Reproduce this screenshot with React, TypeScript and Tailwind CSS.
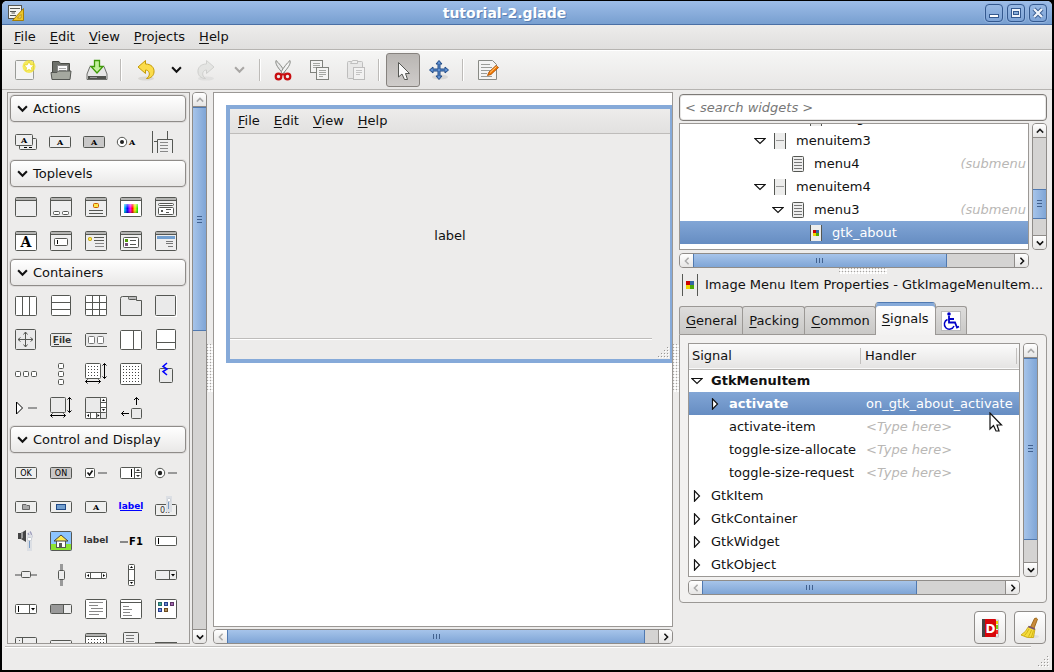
import React from "react";

type Kids = { children?: React.ReactNode };
const INK = "#555753";

/* ---------- small drawing helpers ---------- */

function Box({ x = 0, y = 0, w, h, f = "#fff", s = INK, r = 1 }: { x?: number; y?: number; w: number; h: number; f?: string; s?: string; r?: number }) {
  return <rect x={x + 0.5} y={y + 0.5} width={w - 1} height={h - 1} rx={r} fill={f} stroke={s} />;
}

function Fill({ x, y, w, h, f = INK }: { x: number; y: number; w: number; h: number; f?: string }) {
  return <rect x={x} y={y} width={w} height={h} fill={f} shapeRendering="crispEdges" />;
}

function Line({ d, s = INK }: { d: string; s?: string }) {
  return <path d={d} stroke={s} fill="none" />;
}

function Glyph({ children }: Kids) {
  return (
    <svg width="23" height="23" viewBox="0 0 23 23" className="overflow-visible" aria-hidden="true">
      {children}
    </svg>
  );
}

function Txt({ x, y, size = 8, fill = "#000", serif = false, light = false, children }: { x: number; y: number; size?: number; fill?: string; serif?: boolean; light?: boolean } & Kids) {
  return (
    <text x={x} y={y} fontSize={size} fill={fill} fontWeight={light ? "normal" : "bold"} textAnchor="middle" fontFamily={serif ? "DejaVu Serif, serif" : "DejaVu Sans, sans-serif"}>
      {children}
    </text>
  );
}

function Win({ f = "#eee", children }: { f?: string } & Kids) {
  return (
    <Glyph>
      <Box y={2} w={22} h={20} f={f} />
      <Fill x={1} y={3} w={20} h={2} f="#b4b4b2" />
      <Fill x={1} y={5} w={20} h={1} />
      {children}
    </Glyph>
  );
}

function ButtonShape({ f = "#efefee", children }: { f?: string } & Kids) {
  return (
    <Glyph>
      <Box y={6} w={22} h={12} f={f} />
      {children}
    </Glyph>
  );
}

function Dots({ n, step = 3, x = 3, y = 4 }: { n: number; step?: number; x?: number; y?: number }) {
  const cells = Array.from({ length: n * n }, (_, i) => i);
  return <>{cells.map((i) => <Fill key={i} x={x + (i % n) * step} y={y + Math.floor(i / n) * step} w={1} h={1} f="#444" />)}</>;
}

const SIZE_ARROWS = (
  <>
    <Line s="#000" d="M0.5 19.5H15.5M2.5 17.5L0.5 19.5L2.5 21.5M13.5 17.5L15.5 19.5L13.5 21.5" />
    <Line s="#000" d="M19.5 1.5V16.5M17.5 3.5L19.5 1.5L21.5 3.5M17.5 14.5L19.5 16.5L21.5 14.5" />
  </>
);

/* ---------- palette ---------- */

const actions: [string, React.ReactNode][] = [
  ["Action Group", <Glyph><Box x={4} y={8} w={18} h={12} f="#eee" /><Fill x={9} y={17} w={3} h={1} f="#000" /><Fill x={14} y={17} w={3} h={1} f="#000" /><Box x={0} y={4} w={18} h={12} f="#eee" /><Txt x={9} y={13} serif>A</Txt></Glyph>],
  ["Action", <Glyph><Box x={-1} y={6} w={22} h={12} f="#eee" /><Txt x={10} y={15} serif>A</Txt></Glyph>],
  ["Toggle Action", <Glyph><Box x={-2} y={6} w={22} h={12} f="#c9c8c8" /><Txt x={9} y={15} serif>A</Txt></Glyph>],
  ["Radio Action", <Glyph><circle cx={2} cy={12} r={4.7} fill="#fff" stroke={INK} /><circle cx={2} cy={12} r={2} fill="#222" /><Txt x={12} y={15} serif>A</Txt></Glyph>],
  ["Recent Action", <Glyph><Line d="M-2.5 1V23M-1 11.5H2M12.5 1V9" /><path d="M2.5 23V9.5H17.5V23" fill="#eee" stroke={INK} /><Line s="#888" d="M5 12.5H13M5 15.5H13M5 18.5H13M5 21.5H13" /></Glyph>],
];

const toplevels: [string, React.ReactNode][] = [
  ["Window", <Win />],
  ["Dialog Box", <Win><Box x={3} y={16} w={7} h={4} /><Box x={12} y={16} w={7} h={4} /></Win>],
  ["About Dialog", <Win><Box x={8} y={8} w={6} h={5} f="#fce94f" s="#ce5c00" /><Line d="M4 15.5H18M4 18.5H18" /></Win>],
  ["Color Selection Dialog", <Win f="#fff">
    <defs>
      <linearGradient id="hue"><stop offset="0" stopColor="#0ee" /><stop offset=".25" stopColor="#00f" /><stop offset=".45" stopColor="#f0f" /><stop offset=".6" stopColor="#f00" /><stop offset=".78" stopColor="#ff0" /><stop offset="1" stopColor="#0d0" /></linearGradient>
      <linearGradient id="fade" x2="0" y2="1"><stop offset="0" stopColor="#fff" stopOpacity=".5" /><stop offset=".5" stopColor="#fff" stopOpacity="0" /><stop offset="1" stopColor="#000" stopOpacity=".3" /></linearGradient>
    </defs>
    <rect x="4" y="9" width="14" height="9" fill="url(#hue)" /><rect x="4" y="9" width="14" height="9" fill="url(#fade)" />
  </Win>],
  ["File Chooser Dialog", <Win><Box x={3} y={8} w={16} h={3} /><Box x={3} y={12} w={16} h={8} /><Fill x={6} y={15} w={2} h={2} /><Line d="M11 14.5H16M11 17.5H14" /></Win>],
  ["Font Selection Dialog", <Win f="#fff"><Txt x={11} y={18} size={14} serif>A</Txt></Win>],
  ["Input Dialog", <Win><Box x={4} y={9} w={14} h={8} /><Fill x={7} y={11} w={1} h={4} f="#000" /></Win>],
  ["Message Dialog", <Win><Box x={3} y={8} w={4} h={4} f="#fce94f" s="#c4a000" /><Line d="M9 8.5H19M9 11.5H19" /><Line s="#888" d="M10 14.5H19M10 17.5H19" /></Win>],
  ["Recent Chooser Dialog", <Win><Box x={3} y={8} w={16} h={11} /><Fill x={5} y={10} w={3} h={3} f="#4e9a06" /><Fill x={5} y={14} w={3} h={3} f="#75507b" /><Line d="M10 11.5H16M10 15.5H16" /></Win>],
  ["Assistant", <Win><Fill x={2} y={7} w={18} h={3} f="#729fcf" /><Line s="#777" d="M11 12.5H18M11 14.5H18M13 17.5H18" /></Win>],
];

const containers: [string, React.ReactNode][] = [
  ["Horizontal Box", <Glyph><Box y={2} w={22} h={20} /><Line d="M7.5 2V22M14.5 2V22" /></Glyph>],
  ["Vertical Box", <Glyph><Box x={1} y={1} w={20} h={21} /><Line d="M1 8.5H21M1 15.5H21" /></Glyph>],
  ["Table", <Glyph><Box y={1} w={22} h={21} /><Line d="M7.5 1V22M14.5 1V22M0 8.5H22M0 15.5H22" /></Glyph>],
  ["Notebook", <Glyph><path d="M.5 4.5Q.5 2.5 2.5 2.5H16.5V6.5H21.5V21.5H.5Z" fill="#eaeaea" stroke={INK} /><Box x={8} y={2} w={9} h={4} f="#bbb" /></Glyph>],
  ["Frame", <Glyph><rect x={0.5} y={1.5} width={21} height={21} fill="none" stroke="#fff" /><Box y={1} w={21} h={21} f="#eaeaea" /></Glyph>],
  ["Aspect Frame", <Glyph><Box y={1} w={21} h={21} f="#eaeaea" /><Line d="M10.5 4V19M3 11.5H18M8.5 6.5L10.5 4L12.5 6.5M8.5 16.5L10.5 19L12.5 16.5M5.5 9.5L3 11.5L5.5 13.5M15.5 9.5L18 11.5L15.5 13.5" /></Glyph>],
  ["Menu Bar", <Glyph><path d="M22 5.5H1.5L.5 6.5V17.5L1.5 18.5H22" fill="#eaeaea" stroke={INK} /><Txt x={12} y={15} size={9} fill="#333">File</Txt><Fill x={4} y={16} w={5} h={1} f="#333" /></Glyph>],
  ["Toolbar", <Glyph><path d="M22 5.5H1.5L.5 6.5V17.5L1.5 18.5H22" fill="#eaeaea" stroke={INK} /><Box x={3} y={8} w={7} h={8} s="#777" /><Box x={12} y={8} w={7} h={8} s="#777" /></Glyph>],
  ["Horizontal Panes", <Glyph><Box y={2} w={22} h={20} /><Line d="M13.5 2V22" /></Glyph>],
  ["Vertical Panes", <Glyph><Box x={1} y={1} w={20} h={21} /><Line d="M1 14.5H21" /></Glyph>],
  ["Horizontal Button Box", <Glyph><Box y={9} w={6} h={6} /><Box x={8} y={9} w={6} h={6} /><Box x={16} y={9} w={6} h={6} /></Glyph>],
  ["Vertical Button Box", <Glyph><Box x={8} y={1} w={6} h={6} /><Box x={8} y={9} w={6} h={6} /><Box x={8} y={17} w={6} h={6} /></Glyph>],
  ["Layout", <Glyph><Box y={1} w={16} h={16} /><Dots n={4} />{SIZE_ARROWS}</Glyph>],
  ["Fixed", <Glyph><Box y={1} w={22} h={22} /><Dots n={6} /></Glyph>],
  ["Event Box", <Glyph><Box x={4} y={6} w={14} h={15} f="#eaeaea" /><path d="M12 1L8 4.5L12 7L8 9.5L12 13" stroke="#00f" strokeWidth="1.5" fill="none" /></Glyph>],
  ["Expander", <Glyph><path d="M1.5 6L7.5 12L1.5 18Z" fill="#fff" stroke="#000" /><Fill x={13} y={11} w={9} h={2} f="#999" /></Glyph>],
  ["Viewport", <Glyph><Box y={1} w={16} h={16} f="#eaeaea" />{SIZE_ARROWS}</Glyph>],
  ["Scrolled Window", <Glyph><Box y={1} w={22} h={22} f="#eaeaea" /><Box x={15} y={1} w={7} h={22} /><Box y={16} w={22} h={7} /><Line d="M5.5 16V23M11.5 16V23M15.5 16V23M15 6.5H22M15 11.5H22" /><path d="M17 5L18.5 3L20 5ZM17 13L18.5 15L20 13ZM4 18L2 19.5L4 21ZM12.500 18L14.500 19.500L12.500 21Z" fill="#000" /><Fill x={16} y={17} w={5} h={5} f="#eaeaea" /></Glyph>],
  ["Alignment", <Glyph><Box x={11} y={12} w={11} h={11} f="#eaeaea" /><Line s="#000" d="M16.5 9V1.500M14 4L16.500 1.500L19 4M9 17.500H1.500M4 15L1.500 17.500L4 20" /></Glyph>],
];

const textLines = <Line s="#888" d="M4 5.500H18M4 8.500H13M6 11.500H18M4 14.500H18M4 17.500H14" />;

const controls: [string, React.ReactNode][] = [
  ["Button", <ButtonShape><Txt x={11} y={15} light>OK</Txt></ButtonShape>],
  ["Toggle Button", <ButtonShape f="#c9c8c8"><Txt x={11} y={15} light>ON</Txt></ButtonShape>],
  ["Check Button", <Glyph><Box y={7} w={10} h={10} /><path d="M2.500 11.500L4.500 14L7.500 9.500" stroke="#111" strokeWidth="1.600" fill="none" /><Fill x={13} y={11} w={9} h={2} f="#999" /></Glyph>],
  ["Spin Button", <Glyph><Box y={6} w={22} h={12} /><Fill x={11} y={8} w={1} h={8} f="#000" /><Line d="M14.500 6V18M15 11.500H22" /><path d="M16 10L18 8L20 10ZM16 14L18 16L20 14Z" fill="#333" /></Glyph>],
  ["Radio Button", <Glyph><circle cx={5} cy={12} r={4.700} fill="#fff" stroke={INK} /><circle cx={5} cy={12} r={2.200} fill="#222" /><Fill x={13} y={11} w={9} h={2} f="#999" /></Glyph>],
  ["File Chooser Button", <ButtonShape><path d="M7.500 9.500H11L12 10.500H14.500V14.500H7.500Z" fill="#aaa" stroke="#666" /></ButtonShape>],
  ["Color Button", <ButtonShape><Box x={6} y={9} w={10} h={6} f="#729fcf" s="#204a87" r={0} /></ButtonShape>],
  ["Font Button", <ButtonShape><Txt x={11} y={15} serif>A</Txt></ButtonShape>],
  ["Link Button", <Glyph><Txt x={11} y={14} size={9} fill="#00f">label</Txt><Fill x={0} y={15} w={22} h={1} f="#00f" /></Glyph>],
  ["Scale Button", <Glyph><Box y={9} w={22} h={12} f="#efefee" /><Txt x={10} y={18} size={8} fill="#333" light>0..</Txt><Fill x={11} y={1} w={6} h={16} f="#dcdfe4" /><Fill x={13} y={6} w={1} h={8} f="#7b9cc4" /><Box x={12} y={3} w={4} h={4} s="#c6cbd2" /></Glyph>],
  ["Volume Button", <Glyph><path d="M3 4H6L11 1V13L6 10H3Z" fill="#444" /><path d="M6 4V10L8 9V3Z" fill="#999" /><path d="M13 4Q15 7 13 10M15 2.500Q18.500 7 15 12" stroke="#a0a0be" strokeWidth="1.400" fill="none" /><Fill x={12} y={6} w={5} h={16} f="#dcdfe4" /><Fill x={14} y={11} w={1} h={8} f="#7b9cc4" /><Box x={12} y={8} w={5} h={4} s="#c6cbd2" /></Glyph>],
  ["Image", <Glyph><Box y={2} w={22} h={20} f="#8cc4ff" /><Fill x={1} y={15} w={20} h={6} f="#8ae234" /><Box x={6} y={11} w={10} h={8} f="#fff" r={0} /><path d="M4 12L11 6L18 12Z" fill="#fce94f" stroke="#444" /><Fill x={9} y={14} w={3} h={5} /></Glyph>],
  ["Label", <Glyph><Txt x={11} y={14} size={9} fill="#333">label</Txt></Glyph>],
  ["Accelerator Label", <Glyph><Fill x={0} y={12} w={8} h={2} f="#888" /><Txt x={16} y={16} size={10}>F1</Txt></Glyph>],
  ["Text Entry", <Glyph><Box y={7} w={22} h={10} /><Fill x={3} y={9} w={1} h={6} f="#000" /></Glyph>],
  ["Horizontal Scale", <Glyph><Fill x={0} y={11} w={22} h={2} f="#999" /><Box x={6} y={8} w={10} h={7} f="#eee" /></Glyph>],
  ["Vertical Scale", <Glyph><Fill x={10} y={1} w={3} h={22} f="#999" /><Box x={8} y={7} w={7} h={10} f="#eee" /></Glyph>],
  ["Horizontal Scrollbar", <Glyph><Box y={9} w={22} h={7} /><Line d="M5.500 9V16M16.500 9V16" /><path d="M4 11L2 12.500L4 14ZM18 11L20 12.500L18 14Z" fill="#000" /></Glyph>],
  ["Vertical Scrollbar", <Glyph><Box x={8} y={1} w={7} h={22} /><Line d="M8 6.500H15M8 17.500H15" /><path d="M10 5L11.500 3L13 5ZM10 19L11.500 21L13 19Z" fill="#000" /></Glyph>],
  ["Combo Box", <Glyph><Box y={7} w={22} h={10} f="#eee" /><Line d="M14.500 7V17" /><path d="M16 11H20L18 13.500Z" fill="#000" /></Glyph>],
  ["Combo Box Entry", <Glyph><Box y={7} w={22} h={10} /><Fill x={3} y={9} w={1} h={6} f="#000" /><Line d="M14.500 7V17" /><path d="M16 11H20L18 13.500Z" fill="#000" /></Glyph>],
  ["Progress Bar", <Glyph><Box y={7} w={22} h={10} f="#eee" /><Fill x={1} y={8} w={12} h={8} f="#999" /><Line d="M13.500 7V17" /></Glyph>],
  ["Text View", <Glyph><Box y={2} w={22} h={20} />{textLines}</Glyph>],
  ["Tree View", <Glyph><Box y={2} w={22} h={20} /><Line d="M0 5.500H22" /><Line s="#888" d="M3 9.500H9M3 12.500H12M3 15.500H10M3 18.500H12" /></Glyph>],
  ["Icon View", <Glyph><Box y={2} w={22} h={20} /><Box x={3} y={5} w={4} h={4} f="#3ba99c" s="#2a6b66" r={0} /><Box x={9} y={5} w={4} h={4} f="#6b86c9" s="#27408b" r={0} /><Box x={15} y={5} w={4} h={4} f="#a566b0" s="#5c3566" r={0} /><Box x={3} y={11} w={4} h={4} f="#7b8ce0" s="#27408b" r={0} /><Box x={9} y={11} w={4} h={4} f="#b09060" s="#6d4c1e" r={0} /></Glyph>],
  ["Handle Box", <Glyph><Box y={6} w={22} h={16} f="#eee" /><Line d="M7.500 6V22" /><Fill x={4} y={9} w={1} h={1} /><Fill x={4} y={12} w={1} h={1} /></Glyph>],
  ["Status Bar", <Glyph><Box y={9} w={22} h={10} f="#eee" /></Glyph>],
  ["Calendar", <Glyph><Box y={2} w={22} h={20} /><Fill x={1} y={3} w={20} h={2} f="#b4b4b2" /><Fill x={1} y={5} w={20} h={1} /><Dots n={6} y={8} /></Glyph>],
  ["Popup Menu", <Glyph><Box x={3} y={1} w={16} h={21} f="#eee" /><Line s="#777" d="M6 4.500H14M6 7.500H14M6 10.500H14" /></Glyph>],
  ["Separator", <Glyph><Fill x={0} y={11} w={22} h={2} /></Glyph>],
];

function Palette({ title, items }: { title: string; items: [string, React.ReactNode][] }) {
  return (
    <section className="shrink-0">
      <button className="flex h-[27px] w-full items-center gap-[5px] rounded-[4px] border border-[#8f8c89] bg-linear-to-b from-white to-[#e9e8e7] pl-1.5 text-left shadow-[0_0_0_1px_#dddbda]">
        <Chevron dir="down" size={11} />
        {title}
      </button>
      <div className="grid grid-cols-[repeat(5,35px)] py-[2px]">
        {items.map(([name, icon]) => (
          <button key={name} aria-label={name} className="flex h-[34px] pt-[6px] pl-[5px]">
            {icon}
          </button>
        ))}
      </div>
    </section>
  );
}

/* ---------- scrollbars, handles ---------- */

function Chevron({ dir, size = 9, color = "#111" }: { dir: "up" | "down" | "left" | "right"; size?: number; color?: string }) {
  const paths = { up: "M1 7L5 3L9 7", down: "M1 3L5 7L9 3", left: "M7 1L3 5L7 9", right: "M3 1L7 5L3 9" };
  return (
    <svg width={size} height={size} viewBox="0 0 10 10" aria-hidden="true">
      <path d={paths[dir]} fill="none" stroke={color} strokeWidth="1.900" />
    </svg>
  );
}

function VScroll({ before, thumb, dimStart = false }: { before: string; thumb: string; dimStart?: boolean }) {
  return (
    <div className="flex w-[15px] shrink-0 flex-col overflow-hidden rounded-[4px] border border-[#8f8c89] bg-[#d4d3d2]">
      <button aria-label="Scroll up" className="flex h-[14px] shrink-0 items-center justify-center border-b border-[#8f8c89] bg-linear-to-b from-white to-[#e6e5e4]">
        <Chevron dir="up" size={8} color={dimStart ? "#aaa" : "#222"} />
      </button>
      <div className="-mx-px flex min-h-0 flex-1 flex-col">
        <div className={before} />
        <div className={`${thumb} flex flex-col items-center justify-center gap-[2px] border border-[#5079b0] bg-linear-to-r from-[#a6c4ea] to-[#7fa5d6]`}>
          <i className="h-px w-[5px] bg-[#41618f]" />
          <i className="h-px w-[5px] bg-[#41618f]" />
          <i className="h-px w-[5px] bg-[#41618f]" />
        </div>
      </div>
      <button aria-label="Scroll down" className="flex h-[14px] shrink-0 items-center justify-center border-t border-[#8f8c89] bg-linear-to-b from-white to-[#e6e5e4]">
        <Chevron dir="down" size={8} />
      </button>
    </div>
  );
}

function HScroll({ thumb }: { thumb: string }) {
  return (
    <div className="flex h-[15px] shrink-0 overflow-hidden rounded-[4px] border border-[#8f8c89] bg-[#d4d3d2]">
      <button aria-label="Scroll left" className="flex w-[13px] shrink-0 items-center justify-center bg-linear-to-b from-white to-[#e6e5e4]">
        <Chevron dir="left" size={8} color="#aaa" />
      </button>
      <div className="-my-px flex min-w-0 flex-1">
        <div className={`${thumb} flex items-center justify-center gap-[2px] border border-[#5079b0] bg-linear-to-b from-[#a6c4ea] to-[#7fa5d6]`}>
          <i className="h-[5px] w-px bg-[#41618f]" />
          <i className="h-[5px] w-px bg-[#41618f]" />
          <i className="h-[5px] w-px bg-[#41618f]" />
        </div>
      </div>
      <button aria-label="Scroll right" className="flex w-[14px] shrink-0 items-center justify-center border-l border-[#8f8c89] bg-linear-to-b from-white to-[#e6e5e4]">
        <Chevron dir="right" size={8} />
      </button>
    </div>
  );
}

function DotStrip({ cols, rows }: { cols: number; rows: number }) {
  const dots = Array.from({ length: cols * rows }, (_, i) => i);
  return (
    <svg width={cols * 3} height={rows * 3} aria-hidden="true">
      {dots.map((i) => {
        const x = (i % cols) * 3;
        const y = Math.floor(i / cols) * 3;
        return (
          <g key={i}>
            <Fill x={x + 1} y={y + 1} w={2} h={2} f="#fff" />
            <Fill x={x} y={y} w={1} h={1} f="#a5a3a1" />
          </g>
        );
      })}
    </svg>
  );
}

function Grip() {
  const pts = [[9, 0], [6, 3], [9, 3], [3, 6], [6, 6], [9, 6], [0, 9], [3, 9], [6, 9], [9, 9]];
  return (
    <svg width="11" height="11" aria-hidden="true">
      {pts.map(([x, y]) => (
        <g key={`${x}-${y}`}>
          <Fill x={x + 1} y={y + 1} w={1} h={1} f="#fff" />
          <Fill x={x} y={y} w={1} h={1} f="#999795" />
        </g>
      ))}
    </svg>
  );
}

/* ---------- title bar, menus, tool bar ---------- */

function MenuBar({ items }: { items: string[] }) {
  return (
    <>
      {items.map((t) => (
        <button key={t} className="px-[7px]">
          <Mn>{t}</Mn>
        </button>
      ))}
    </>
  );
}

function Mn({ children }: { children: string }) {
  return (
    <>
      <span className="underline decoration-1 underline-offset-2">{children[0]}</span>
      {children.slice(1)}
    </>
  );
}

function TitleButton({ label, children }: { label: string } & Kids) {
  return (
    <button aria-label={label} className="flex h-[18px] w-[18px] items-center justify-center rounded-[4px] border border-[#34598f] bg-linear-to-b from-[#98b9e4] to-[#7da3d6] shadow-[0_0_0_1px_#94b4e0]">
      <svg width="12" height="12" viewBox="0 0 12 12" aria-hidden="true">{children}</svg>
    </button>
  );
}

function Tool({ label, w, active = false, children }: { label: string; w: string; active?: boolean } & Kids) {
  return (
    <button
      aria-label={label}
      className={`${w} flex h-[34px] shrink-0 items-center justify-center ${active ? "rounded-[3px] border border-[#86827e] bg-linear-to-b from-[#b9b6b3] to-[#cfccca]" : ""}`}
    >
      {children}
    </button>
  );
}

function Sep() {
  return <div className="h-[22px] w-[2px] shrink-0 border-l border-[#bdbbb8] bg-white" />;
}

function Art({ dim = false, children }: { dim?: boolean } & Kids) {
  return (
    <svg width="24" height="24" viewBox="0 0 24 24" aria-hidden="true" opacity={dim ? 0.4 : 1}>
      {children}
    </svg>
  );
}

const ARROW = "M11.500 2.500V6C17 6 20.500 9.500 20 14C19.800 17.500 17 20.500 12.500 20.500C15.500 18.500 16 15.500 14.500 13.500C13.500 12.200 12.500 12 11.500 12V15.500L4 9Z";

function ToolBar() {
  return (
    <div className="flex h-10 shrink-0 items-center border-b border-[#b6b4b1] bg-linear-to-b from-[#f6f6f5] to-[#e8e7e6] pl-[5px] shadow-[inset_0_1px_0_#fff]">
      <Tool label="New" w="w-9">
        <Art>
          <rect x="2.500" y="2.500" width="18" height="19" rx="1" fill="#f4f4f3" stroke="#999b97" />
          <circle cx="16" cy="8.500" r="6.500" fill="#f6e72c" opacity=".75" />
          <path d="M16 3.500L17.600 6.700L21 7.200L18.500 9.700L19.100 13.200L16 11.500L12.900 13.200L13.500 9.700L11 7.200L14.400 6.700Z" fill="#fff" stroke="#e5d010" strokeWidth=".7" />
        </Art>
      </Tool>
      <Tool label="Open" w="w-9">
        <Art>
          <path d="M3.500 3.500H10L11.500 5.500H20.500V20H3.500Z" fill="#6d706a" stroke="#484a45" />
          <path d="M8.500 7.500H18.500V17H8.500Z" fill="#fafafa" stroke="#888" />
          <path d="M10 10.500H17M10 12.500H17" stroke="#aaa" />
          <path d="M2 14.500H8L9.500 13H22L21 21.500H3Z" fill="#a5a89f" stroke="#555753" />
        </Art>
      </Tool>
      <Tool label="Save" w="w-9">
        <Art>
          <path d="M5 8.500H19L22 16V21.500H2V16Z" fill="#e6e6e6" stroke="#6c6e6a" />
          <path d="M3 18H21V21H3Z" fill="#50524e" />
          <path d="M5 19.500H12" stroke="#999" />
          <path d="M9.500 2.500H14.500V8.500H18L12 15L6 8.500H9.500Z" fill="#c2f09a" stroke="#3f9a08" strokeWidth="1.300" />
        </Art>
      </Tool>
      <div className="flex w-3 justify-center"><Sep /></div>
      <Tool label="Undo" w="w-[38px]">
        <Art><ellipse cx="12" cy="20.500" rx="8" ry="2" fill="#dad8d5" /><path d={ARROW} fill="#fbdc4a" stroke="#c49a06" /></Art>
      </Tool>
      <Tool label="Undo history" w="w-[22px]"><Chevron dir="down" size={11} /></Tool>
      <Tool label="Redo" w="w-[38px]">
        <Art dim><g transform="translate(24 0) scale(-1 1)"><ellipse cx="12" cy="20.500" rx="8" ry="2" fill="#d0d0d0" /><path d={ARROW} fill="#d4d6d2" stroke="#a0a29e" /></g></Art>
      </Tool>
      <Tool label="Redo history" w="w-[28px]"><Chevron dir="down" size={11} color="#a8a6a4" /></Tool>
      <div className="flex w-2 justify-end"><Sep /></div>
      <Tool label="Cut" w="w-[44px]">
        <Art>
          <path d="M5 2.500C4 6 7 10 12.500 16L14 14C11 9 8 5 5 2.500Z" fill="#e8e8e8" stroke="#888a85" />
          <path d="M19 2.500C20 6 17 10 11.500 16L10 14C13 9 16 5 19 2.500Z" fill="#f4f4f4" stroke="#888a85" />
          <circle cx="7.500" cy="18.500" r="2.800" fill="none" stroke="#c80d10" strokeWidth="2.200" />
          <circle cx="16.500" cy="18.500" r="2.800" fill="none" stroke="#c80d10" strokeWidth="2.200" />
          <path d="M10 16.500H14" stroke="#c80d10" strokeWidth="2" />
        </Art>
      </Tool>
      <Tool label="Copy" w="w-[30px]">
        <Art>
          <rect x="2.500" y="2.500" width="12" height="12" fill="#f4f4f3" stroke="#80827d" />
          <path d="M5 5.500H12M5 7.500H12M5 9.500H10" stroke="#a4a6a2" />
          <rect x="8.500" y="9.500" width="12" height="12" fill="#f4f4f3" stroke="#80827d" />
          <path d="M11 12.500H18M11 14.500H18M11 16.500H18M11 18.500H15" stroke="#a4a6a2" />
        </Art>
      </Tool>
      <Tool label="Paste" w="w-[43px]">
        <Art dim>
          <rect x="2.500" y="3.500" width="15" height="17" rx="1" fill="#ddd" stroke="#777" />
          <path d="M7.500 2.500H12.500V5.500H5.500Z" fill="#eee" stroke="#777" />
          <rect x="8.500" y="9.500" width="11" height="12" fill="#fafafa" stroke="#777" />
          <path d="M11 12.500H17M11 14.500H17M11 16.500H15" stroke="#888" />
        </Art>
      </Tool>
      <Sep />
      <div className="w-[6px]" />
      <Tool label="Select" w="w-[34px]" active>
        <Art><path d="M7.500 4.500V19L11 16L13.500 21.500H16.500L14.500 15.500H18.500Z" fill="#fafafa" stroke="#555753" /></Art>
      </Tool>
      <Tool label="Drag and resize" w="w-[38px]">
        <Art>
          <ellipse cx="13" cy="19" rx="8" ry="2.500" fill="#d8d7d5" />
          <path d="M12 2.500L15 6H13V11H18V9L21.500 12L18 15V13H13V18H15L12 21.500L9 18H11V13H6V15L2.500 12L6 9V11H11V6H9Z" fill="#5f8fd0" stroke="#1f4a87" />
        </Art>
      </Tool>
      <div className="w-[4px]" />
      <Sep />
      <Tool label="Edit properties" w="w-[48px]">
        <Art>
          <path d="M2.500 2.500H16.500L20.500 6.500V21.500H2.500Z" fill="#f4f4f3" stroke="#888a85" />
          <path d="M5 6.500H14M5 9.500H16M5 12.500H14M5 15.500H11M5 18.500H16" stroke="#9b9d99" />
          <path d="M11.500 17.500L13 14L20 7.500L22.500 9.500L15 16.500Z" fill="#f57900" stroke="#a34a00" strokeWidth=".8" />
          <path d="M14 14.500L20.500 8.500" stroke="#fcd28a" />
        </Art>
      </Tool>
    </div>
  );
}

/* ---------- widget tree ---------- */

function Triangle({ open }: { open: boolean }) {
  return (
    <svg width="12" height="12" viewBox="0 0 12 12" className="shrink-0" aria-hidden="true">
      <path d={open ? "M.8 3.500H11.200L6 8.500Z" : "M3.500 .8V11.200L8.500 6Z"} fill="#fff" stroke="#111" strokeWidth="1.200" />
    </svg>
  );
}

function ItemIcon({ kind, big = false }: { kind: "item" | "menu" | "image"; big?: boolean }) {
  if (big) {
    return (
      <svg width="22" height="22" viewBox="0 0 22 22" className="shrink-0" aria-hidden="true">
        <Line d="M3.500 0V22M18.500 0V22" />
        <Fill x={7} y={7} w={4} h={4} f="#c00" /><Fill x={11} y={7} w={4} h={4} f="#3465a4" /><Fill x={7} y={11} w={4} h={4} f="#edd400" /><Fill x={11} y={11} w={4} h={4} f="#4ea806" />
      </svg>
    );
  }
  return (
    <svg width="16" height="16" viewBox="0 0 16 16" className="shrink-0" aria-hidden="true">
      <rect x="2" y="0" width="12" height="16" fill="#ededec" />
      {kind === "menu" ? <><Box x={2} w={12} h={16} f="#eee" /><Line s="#777" d="M4 3.500H12M4 6.500H12M4 9.500H12M4 12.500H12" /></> : <Line d="M2.500 0V16M13.500 0V16" />}
      {kind === "item" && <Line s="#999" d="M4 7.500H12" />}
      {kind === "image" && <><Fill x={5} y={5} w={3} h={3} f="#c00" /><Fill x={8} y={5} w={3} h={3} f="#3465a4" /><Fill x={5} y={8} w={3} h={3} f="#edd400" /><Fill x={8} y={8} w={3} h={3} f="#4ea806" /></>}
    </svg>
  );
}

const tree = [
  { name: "imagemenuitem5", pad: "pl-[110px]", kind: "image", open: false, note: "" },
  { name: "menuitem3", pad: "pl-[74px]", kind: "item", open: true, note: "" },
  { name: "menu4", pad: "pl-[92px]", kind: "menu", open: false, note: "(submenu" },
  { name: "menuitem4", pad: "pl-[74px]", kind: "item", open: true, note: "" },
  { name: "menu3", pad: "pl-[92px]", kind: "menu", open: true, note: "(submenu" },
  { name: "gtk_about", pad: "pl-[110px]", kind: "image", open: false, note: "" },
] as const;

const signals: { name: string; handler?: string; level: 0 | 1; mark?: "open" | "closed"; bold?: boolean; selected?: boolean }[] = [
  { name: "GtkMenuItem", level: 0, mark: "open", bold: true },
  { name: "activate", handler: "on_gtk_about_activate", level: 1, mark: "closed", bold: true, selected: true },
  { name: "activate-item", handler: "<Type here>", level: 1 },
  { name: "toggle-size-allocate", handler: "<Type here>", level: 1 },
  { name: "toggle-size-request", handler: "<Type here>", level: 1 },
  { name: "GtkItem", level: 0, mark: "closed" },
  { name: "GtkContainer", level: 0, mark: "closed" },
  { name: "GtkWidget", level: 0, mark: "closed" },
  { name: "GtkObject", level: 0, mark: "closed" },
];

function Inspector() {
  return (
    <div className="flex w-[368px] shrink-0 flex-col pt-[2px]">
      <input
        aria-label="Search widgets"
        placeholder="< search widgets >"
        className="h-[27px] w-full shrink-0 rounded-[4px] border border-[#7d7a77] bg-white px-[5px] text-[13px] italic shadow-[inset_0_0_0_1px_#e8e7e6] placeholder:text-[#777]"
      />
      <div className="mt-[2px] flex h-[127px] shrink-0 gap-[3px]">
        <ul role="tree" className="flex min-w-0 flex-1 flex-col justify-end overflow-hidden border border-[#9b9895] bg-white pb-[5px]">
          {tree.map((n) => (
            <li
              key={n.name}
              role="treeitem"
              aria-selected={n.name === "gtk_about"}
              className={`${n.pad} flex h-[23px] shrink-0 items-center pr-[2px] ${n.name === "gtk_about" ? "bg-linear-to-b from-[#82a6d6] to-[#668dc2] text-white" : ""}`}
            >
              <span className="flex w-[18px] shrink-0">{n.open && <Triangle open />}</span>
              <ItemIcon kind={n.kind} />
              <span className="ml-[8px] flex-1">{n.name}</span>
              {n.note && <span className="text-[#b9b7b5] italic">{n.note}</span>}
            </li>
          ))}
        </ul>
        <VScroll before="h-[53%]" thumb="h-[30%]" />
      </div>
      <div className="mt-[3px] mr-[18px] flex flex-col"><HScroll thumb="w-[79%]" /></div>
      <div className="flex h-[6px] shrink-0 items-center justify-center"><DotStrip cols={16} rows={2} /></div>
      <div className="flex h-[22px] shrink-0 items-center gap-[4px] whitespace-nowrap">
        <ItemIcon kind="image" big />
        <span>Image Menu Item Properties - GtkImageMenuItem...</span>
      </div>

      <div role="tablist" className="relative z-10 mt-[6px] -mb-px flex h-[33px] shrink-0 items-end">
        {["General", "Packing", "Common"].map((t) => (
          <button key={t} role="tab" className="-mr-px mb-px h-[28px] rounded-t-[3px] border border-b-0 border-[#9b9895] bg-linear-to-b from-[#dedddc] to-[#c9c8c6] pr-[5px] pl-[6px]">
            <Mn>{t}</Mn>
          </button>
        ))}
        <button role="tab" aria-selected className="h-[33px] rounded-t-[4px] border border-b-0 border-[#9b9895] border-t-[#5079b0] bg-linear-to-b from-white to-[#f3f2f1] px-[6px] shadow-[inset_0_3px_0_#86aad9]">
          <Mn>Signals</Mn>
        </button>
        <button role="tab" aria-label="Accessibility" className="-ml-px mb-px flex h-[28px] w-8 items-center justify-center rounded-t-[3px] border border-b-0 border-[#9b9895] bg-linear-to-b from-[#dedddc] to-[#c9c8c6]">
          <svg width="20" height="20" viewBox="0 0 20 20" aria-hidden="true">
            <rect width="20" height="20" fill="#fff" />
            <rect x=".5" y=".5" width="19" height="19" fill="none" stroke="#bbb" />
            <circle cx="8" cy="3" r="1.800" fill="#0000c8" />
            <path d="M8 5V11.500H14L16 16.500L18 15.500M8 8H13" stroke="#0000c8" strokeWidth="1.800" fill="none" />
            <path d="M6.500 8.500A5 5 0 1 0 13 15" stroke="#0000c8" strokeWidth="1.500" fill="none" />
          </svg>
        </button>
      </div>

      <div role="tabpanel" className="flex min-h-0 flex-1 flex-col rounded-b-[4px] rounded-tr-[4px] border border-[#9b9895] bg-[#f2f1f0] px-2 pt-2 pb-[7px]">
        <div className="flex min-h-0 flex-1 gap-[3px]">
          <div className="relative min-w-0 flex-1 border border-[#9b9895] bg-white">
            <div className="h-full overflow-hidden">
              <table className="w-full table-fixed border-collapse text-left">
                <thead>
                  <tr className="h-[25px] border-b border-[#b6b4b1] bg-linear-to-b from-[#fbfbfb] to-[#e5e4e3]">
                    <th className="w-[172px] p-0 pl-[3px] font-normal">
                      <div className="border-r border-[#c2c0be]">Signal</div>
                    </th>
                    <th className="p-0 pl-[4px] font-normal">
                      <div className="mr-[2px] border-r border-[#c2c0be]">Handler</div>
                    </th>
                  </tr>
                </thead>
                <tbody>
                  {signals.map((s) => (
                    <tr key={s.name} className={`h-[23px] ${s.selected ? "bg-linear-to-b from-[#82a6d6] to-[#668dc2] text-white" : ""}`}>
                      <td className={`p-0 whitespace-nowrap ${s.level ? "pl-[20px]" : "pl-[2px]"}`}>
                        <div className={`flex items-center ${s.bold ? "font-bold" : ""}`}>
                          <span className="flex w-[20px] shrink-0 items-center">{s.mark && <Triangle open={s.mark === "open"} />}</span>
                          {s.name}
                        </div>
                      </td>
                      <td className={`p-0 pl-[5px] whitespace-nowrap ${s.selected ? "" : "text-[#b9b7b5] italic"}`}>{s.handler}</td>
                    </tr>
                  ))}
                </tbody>
              </table>
            </div>
            <svg width="14" height="20" viewBox="0 0 14 20" className="absolute top-[68px] right-4" aria-hidden="true">
              <path d="M1 1V17L4.500 13.500L7 19H10L8 13H12.500Z" fill="#fff" stroke="#111" strokeWidth="1.200" />
            </svg>
          </div>
          <VScroll before="h-0" thumb="h-[89%]" dimStart />
        </div>
        <div className="mt-[3px] mr-[18px] flex flex-col"><HScroll thumb="w-[71%]" /></div>
      </div>

      <div className="mt-2 flex h-[33px] shrink-0 justify-end gap-2 pr-px">
        <button aria-label="Documentation" className="flex w-8 items-center justify-center rounded-[4px] border border-[#8f8c89] bg-linear-to-b from-white to-[#e9e8e7]">
          <svg width="20" height="20" viewBox="0 0 20 20" aria-hidden="true">
            <rect x="15" y="2" width="3.500" height="17" fill="#e8e8e8" stroke="#aaa" strokeWidth=".6" />
            <Fill x={16} y={3} w={2} h={3} f="#edd400" /><Fill x={16} y={7} w={2} h={4} f="#73d216" /><Fill x={16} y={12} w={2} h={4} f="#ef2929" />
            <rect x="2" y="1" width="14" height="18" rx="1" fill="#d8060a" />
            <rect x="2" y="1" width="3" height="18" fill="#444" />
            <text x="10.500" y="14.500" fontSize="12" fontWeight="bold" fill="#fff" textAnchor="middle" fontFamily="DejaVu Sans, sans-serif">D</text>
          </svg>
        </button>
        <button aria-label="Clear" className="flex w-8 items-center justify-center rounded-[4px] border border-[#8f8c89] bg-linear-to-b from-white to-[#e9e8e7]">
          <svg width="22" height="22" viewBox="0 0 22 22" aria-hidden="true">
            <ellipse cx="13" cy="19.500" rx="7" ry="1.800" fill="#ddd" />
            <path d="M11.500 10L15.500 1.500Q17.500 .3 18.500 2.200L15 11.500Z" fill="#c98b3c" stroke="#8f5902" strokeWidth=".8" />
            <path d="M9.500 9.500L16 12L14.500 20.500Q8 21.500 2 18Q7 15 9.500 9.500Z" fill="#f5dc3c" stroke="#c4a000" strokeWidth=".8" />
            <path d="M10 12Q8 16 5.500 18.500M12.500 13Q11 17 9.500 19.500M14.500 13.500L12.500 20" stroke="#c9a80c" strokeWidth=".8" fill="none" />
            <path d="M9.800 8.800L16.200 11.400L15.700 13L9 10.300Z" fill="#75507b" />
          </svg>
        </button>
      </div>
    </div>
  );
}

/* ---------- window ---------- */

export default function App() {
  return (
    <div className="h-screen cursor-default overflow-hidden bg-black px-[2px] pt-px pb-[2px] font-['DejaVu_Sans','Liberation_Sans',sans-serif] text-[13px] leading-[16px] text-[#111]">
      <div className="flex h-full flex-col overflow-hidden rounded-t-[5px] bg-[#edeceb]">
        <header className="flex h-6 shrink-0 items-center border-b border-[#4a6fa5] bg-linear-to-b from-[#9dbde8] to-[#789fd0] pr-[5px] pl-[6px]">
          <svg width="16" height="16" viewBox="0 0 16 16" aria-hidden="true">
            <rect x=".5" y=".5" width="13" height="13" fill="#f4f4f0" stroke="#555753" />
            <path d="M2 3.500H12M2 6.500H8M2 10.500H8M3.500 8H7" stroke="#555753" />
            <path d="M15.500 3.500V15.500H4.500Z" fill="#edc62b" stroke="#a67e05" />
            <path d="M13 9.500V13H9.500Z" fill="#f9e9a0" stroke="#a67e05" strokeWidth=".7" />
          </svg>
          <h1 className="flex-1 text-center text-[14px] font-bold text-white [text-shadow:1px_1px_0_#5a7fb3]">tutorial-2.glade</h1>
          <div className="flex gap-[4px]">
            <TitleButton label="Minimize"><rect x="1.500" y="7.500" width="9" height="3" fill="#fff" stroke="#34598f" /></TitleButton>
            <TitleButton label="Maximize"><rect x="1.500" y="1.500" width="9" height="9" fill="#eef3fa" stroke="#34598f" /><rect x="3.500" y="4.500" width="5" height="3" fill="#89add9" stroke="#34598f" /></TitleButton>
            <TitleButton label="Close"><path d="M2 2L10 10M10 2L2 10" stroke="#34598f" strokeWidth="4" /><path d="M2 2L10 10M10 2L2 10" stroke="#eef3fa" strokeWidth="2.400" /></TitleButton>
          </div>
        </header>

        <nav className="flex h-[25px] shrink-0 items-center border-b border-[#b6b4b1] bg-linear-to-b from-[#edeceb] to-[#e0dfde] pl-[5px]">
          <MenuBar items={["File", "Edit", "View", "Projects", "Help"]} />
        </nav>

        <ToolBar />

        <main className="flex min-h-0 flex-1 px-[5px] pt-[2px] pb-[2px]">
          <div className="flex w-[183px] shrink-0 flex-col overflow-hidden border border-[#9b9895] pt-[2px] pr-[3px] pl-[2px]">
            <Palette title="Actions" items={actions} />
            <Palette title="Toplevels" items={toplevels} />
            <Palette title="Containers" items={containers} />
            <Palette title="Control and Display" items={controls} />
          </div>
          <div className="ml-[2px] flex"><VScroll before="h-0" thumb="h-[43%]" dimStart /></div>
          <div className="flex w-[6px] shrink-0 items-center justify-center"><DotStrip cols={2} rows={16} /></div>

          <div className="flex min-w-0 flex-1 flex-col gap-[2px]">
            <div className="min-h-0 flex-1 overflow-hidden border border-[#9b9895] bg-white pt-[12px] pl-[12px]">
              <div className="flex h-[258px] flex-col border-4 border-r-2 border-[#86aad9] bg-[#edeceb]">
                <div className="flex h-[25px] shrink-0 items-center border-b border-[#bebcba] bg-linear-to-b from-[#edeceb] to-[#e2e1e0] pl-px">
                  <MenuBar items={["File", "Edit", "View", "Help"]} />
                </div>
                <div className="flex flex-1 items-center justify-center">label</div>
                <div className="flex h-[21px] shrink-0 items-end justify-end pr-px pb-px">
                  <div className="h-full flex-1 border-t border-[#bebcba] shadow-[inset_0_1px_0_#fff]" />
                  <div className="flex w-[17px] justify-end"><Grip /></div>
                </div>
              </div>
            </div>
            <HScroll thumb="w-[97%]" />
          </div>

          <div className="flex w-[6px] shrink-0 items-center justify-center"><DotStrip cols={2} rows={16} /></div>
          <Inspector />
        </main>

        <footer className="flex h-6 shrink-0 items-end pr-[3px] pb-[3px] pl-[3px]">
          <div className="h-[21px] flex-1 border-t border-[#bebcba] shadow-[inset_0_1px_0_#fff]" />
          <div className="flex w-[18px] justify-end"><Grip /></div>
        </footer>
      </div>
    </div>
  );
}
